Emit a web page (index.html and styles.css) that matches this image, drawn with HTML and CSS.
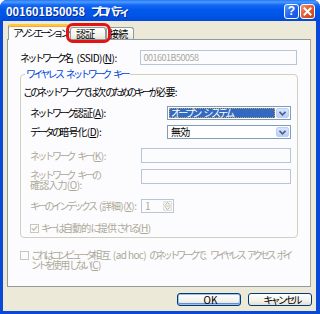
FILE: index.html
```html
<!DOCTYPE html>
<html lang="ja">
<head>
<meta charset="utf-8">
<link rel="stylesheet" href="styles.css">
</head>
<body>
<div class="window">
  <div class="titlebar">
    <span class="title"><span class="en">001601B50058</span> プロパティ</span>
    <span class="tb-btn help">?</span>
    <span class="tb-btn close"><svg width="13" height="13" viewBox="0 0 13 13"><path d="M3.5 3.5 L9.5 9.5 M9.5 3.5 L3.5 9.5" stroke="#fff" stroke-width="2" stroke-linecap="square"/></svg></span>
  </div>
  <div class="frame">
    <div class="body">
      <div class="tabs">
        <div class="tab active">アソシエーション</div>
        <div class="tab t2"><span class="k">認証</span></div>
        <div class="tab t3"><span class="k">接続</span></div>
        <div class="marker"></div>
      </div>
      <div class="panel">
        <div class="row ssid">
          <span class="lbl lbl-ssid">ネットワーク<span class="k">名</span> <span class="en">(SSID)(<u>N</u>):</span></span>
          <span class="edit disabled w-ssid"><span class="val">001601B50058</span></span>
        </div>
        <fieldset class="group">
          <legend>ワイヤレス ネットワーク キー</legend>
          <div class="intro">このネットワークでは<span class="k">次</span>のためのキーが<span class="k">必要</span><span class="en">:</span></div>
          <div class="row r-auth">
            <span class="lbl lbl-combo">ネットワーク<span class="k">認証</span><span class="en">(<u>A</u>):</span></span>
            <span class="combo"><span class="combo-text sel">オープン<span class="gap"></span>システム</span><span class="drop"><svg width="7" height="5" viewBox="0 0 7 5"><path d="M0.5 0.8 L3.5 3.8 L6.5 0.8" fill="none" stroke="#4D6185" stroke-width="1.6"/></svg></span></span>
          </div>
          <div class="row r-enc">
            <span class="lbl lbl-combo">データの<span class="k">暗号化</span><span class="en">(<u>D</u>):</span></span>
            <span class="combo"><span class="combo-text"><span class="k">無効</span></span><span class="drop"><svg width="7" height="5" viewBox="0 0 7 5"><path d="M0.5 0.8 L3.5 3.8 L6.5 0.8" fill="none" stroke="#4D6185" stroke-width="1.6"/></svg></span></span>
          </div>
          <div class="row r-key gray">
            <span class="lbl lbl-key">ネットワーク キー<span class="en">(<u>K</u>):</span></span>
            <span class="edit disabled w-key"></span>
          </div>
          <div class="row r-confirm gray">
            <span class="lbl lbl-key two">ネットワーク キーの<br><span class="k">確認入力</span><span class="en">(<u>O</u>):</span></span>
            <span class="edit disabled w-key"></span>
          </div>
          <div class="row r-index gray">
            <span class="lbl lbl-key">キーのインデックス <span class="en">(</span><span class="k">詳細</span><span class="en">)(<u>X</u>):</span></span>
            <span class="spin"><span class="spin-val en">1</span><span class="spin-btns"><span class="sb"><svg width="5" height="3" viewBox="0 0 5 3"><path d="M0.5 2.5 L2.5 0.5 L4.5 2.5" fill="none" stroke="#B5B5A8" stroke-width="1"/></svg></span><span class="sb"><svg width="5" height="3" viewBox="0 0 5 3"><path d="M0.5 0.5 L2.5 2.5 L4.5 0.5" fill="none" stroke="#B5B5A8" stroke-width="1"/></svg></span></span></span>
          </div>
          <div class="row r-auto gray">
            <span class="chk chk-dis"><svg width="7" height="7" viewBox="0 0 7 7"><path d="M0.8 3.3 L2.7 5.3 L6.3 1.2" fill="none" stroke="#C4C3B4" stroke-width="1.4"/></svg></span>
            <span class="lbl">キーは<span class="k">自動的</span>に<span class="k">提供</span>される<span class="en">(<u>H</u>)</span></span>
          </div>
        </fieldset>
        <div class="adhoc gray">
          <span class="chk chk-big"></span>
          <span class="lbl">これはコンピュータ<span class="k">相互</span> <span class="en">(ad hoc)</span> のネットワークで、ワイヤレス アクセス ポイ<br>ントを<span class="k">使用</span>しない<span class="en">(<u>C</u>)</span></span>
        </div>
      </div>
      <div class="buttons">
        <span class="btn default"><span class="en">OK</span></span>
        <span class="btn">キャンセル</span>
      </div>
    </div>
  </div>
</div>
</body>
</html>
```
FILE: styles.css
```css
* { box-sizing: border-box; margin: 0; padding: 0; }
html, body { width: 320px; height: 314px; overflow: hidden; background: #fff; }
body {
  font-family: "Noto Sans CJK JP", "Noto Sans", sans-serif;
  font-size: 10px;
  line-height: 10px;
  color: #000;
  letter-spacing: -2.7px;
  word-spacing: 4px;
}
.k { letter-spacing: -0.8px; }
.en { letter-spacing: -0.5px; word-spacing: 0; }
u { text-decoration: underline; text-underline-offset: 1px; }

.window {
  width: 320px;
  height: 314px;
  display: flex;
  flex-direction: column;
  background: #0A48D8;
  border-radius: 7px 7px 0 0;
  overflow: hidden;
}
.titlebar {
  height: 21px;
  flex: none;
  display: flex;
  align-items: center;
  padding: 1px 5px 0 6px;
  background: linear-gradient(to bottom, #2A74F4 0, #4A9CFF 2px, #1468F4 5px, #0058EB 10px, #0054E5 16px, #0049D8 21px);
}
.title {
  flex: 1;
  color: #fff;
  font-weight: bold;
  font-size: 11px;
  line-height: 11px;
  text-shadow: 1px 1px 0 #0B2A9C;
  letter-spacing: -3.7px;
  word-spacing: 7px;
  white-space: nowrap;
}
.title .en { letter-spacing: 0; }
.tb-btn {
  width: 15px;
  height: 15px;
  border: 1px solid #fff;
  border-radius: 3px;
  display: flex;
  align-items: center;
  justify-content: center;
  color: #fff;
  font-family: "Liberation Sans", sans-serif;
  letter-spacing: 0;
  font-weight: bold;
  font-size: 12px;
}
.help { background: linear-gradient(135deg, #5A9BFF, #1C60EC 60%, #1A55D8); margin-right: 1px; }
.close { background: linear-gradient(135deg, #F09477, #E25A2E 50%, #C8401C); }

.frame {
  flex: 1;
  display: flex;
  padding: 0 4px 3px 3px;
  min-height: 0;
}
.body {
  flex: 1;
  min-width: 0;
  background: #ECE9D8;
  display: flex;
  flex-direction: column;
}

.tabs {
  position: relative;
  height: 18px;
  flex: none;
  display: flex;
  align-items: flex-end;
  padding-left: 5px;
}
.tab {
  height: 12px;
  border: 1px solid #919B9C;
  border-bottom: none;
  border-radius: 3px 3px 0 0;
  background: linear-gradient(#FFFFFF, #F2F1EA 70%, #E5E4DA);
  display: flex;
  align-items: center;
  white-space: nowrap;
  padding-top: 1px;
}
.tab.active {
  height: 16px;
  width: 61px;
  padding: 0 0 0 4px;
  margin-bottom: -1px;
  margin-right: 1px;
  background: #FCFCFE;
  border-top: 2px solid #FFC83C;
  box-shadow: inset 0 1px 0 #F5A742;
  letter-spacing: -3.2px;
  position: relative;
  z-index: 1;
}
.t2 { width: 36px; padding-left: 5px; }
.t3 { width: 28px; padding-left: 2px; }
.marker {
  position: absolute;
  left: 63px;
  top: 2px;
  width: 45px;
  height: 20px;
  border: 3px solid #E41414;
  border-radius: 7px;
  z-index: 2;
}

.panel {
  height: 248px;
  flex: none;
  margin: 0 5px 0 4px;
  background: #FCFCFE;
  border: 1px solid #919B9C;
  border-right-color: #A7A89E;
  padding: 10px 13px 0 12px;
}

.row { display: flex; align-items: center; }
.lbl { white-space: nowrap; }
.gray { color: #ACA899; }
.ssid { height: 15px; }
.lbl-ssid { width: 120px; }
.edit {
  height: 15px;
  border: 1px solid #7F9DB9;
  background: #fff;
  padding: 0 3px;
  display: flex;
  align-items: center;
}
.edit.disabled { border-color: #B7C5D6; background: #FCFCFE; color: #A8A8A0; }
.val { font-size: 9px; letter-spacing: -0.5px; }
.w-ssid { width: 158px; }
.w-key { width: 150px; }

.group {
  margin-top: 4px;
  width: 278px;
  border: 1px solid #D0D0BF;
  border-radius: 4px;
  padding: 0 0 4px 0;
}
.group legend {
  margin-left: 4px;
  padding: 0 2px 0 1px;
  color: #0046D5;
  line-height: 10px;
}
.intro { margin: 8px 0 0 2px; height: 10px; white-space: nowrap; }
.r-auth, .r-enc, .r-key, .r-confirm, .r-index, .r-auto { margin-left: 9px; }
.r-auth { margin-top: 9px; height: 14px; }
.r-enc { margin-top: 5px; height: 14px; }
.lbl-combo { width: 137px; }
.combo {
  width: 124px;
  height: 14px;
  border: 1px solid #7F9DB9;
  background: #fff;
  display: flex;
  align-items: stretch;
  padding: 1px;
}
.combo-text {
  flex: 1;
  display: flex;
  align-items: center;
  padding-left: 2px;
  margin-right: 1px;
  white-space: nowrap;
}
.gap { display: inline-block; width: 4px; }
.combo-text.sel {
  background: #316AC5;
  color: #fff;
  outline: 1px dotted #C9A24A;
  outline-offset: -1px;
}
.drop {
  width: 13px;
  border: 1px solid #B9D1FA;
  border-radius: 2px;
  background: linear-gradient(#D9E5FD, #BCCDF8);
  display: flex;
  align-items: center;
  justify-content: center;
}
.r-key { margin-top: 9px; height: 15px; }
.lbl-key { width: 111px; }
.r-confirm { margin-top: 6px; align-items: flex-start; height: 20px; }
.lbl-key.two { padding-top: 1px; }
.r-index { margin-top: 10px; height: 14px; }
.spin {
  width: 33px;
  height: 14px;
  border: 1px solid #B7C5D6;
  display: flex;
  background: #FCFCFE;
}
.spin-val { flex: 1; padding-left: 3px; display: flex; align-items: center; color: #ACA899; }
.spin-btns { width: 10px; display: flex; flex-direction: column; padding: 1px 1px 1px 0; }
.sb {
  flex: 1;
  border: 1px solid #E0DFD6;
  border-radius: 1px;
  background: #F4F3EE;
  display: flex;
  align-items: center;
  justify-content: center;
}
.r-auto { margin-top: 10px; height: 10px; }
.chk {
  width: 9px;
  height: 9px;
  border: 1px solid #1C5180;
  background: #fff;
  display: flex;
  align-items: center;
  justify-content: center;
  flex: none;
}
.chk-dis { border-color: #C9C7BA; background: #FCFCFE; margin-right: 2px; }
.adhoc {
  margin-top: 12px;
  display: flex;
  align-items: flex-start;
}
.adhoc .lbl { letter-spacing: -3.2px; }
.adhoc .k { letter-spacing: -1.2px; }
.adhoc .en { letter-spacing: -0.6px; }
.chk-big { border-color: #C9C7BA; background: #FCFCFE; margin-top: 1px; margin-right: 2px; }

.buttons {
  display: flex;
  justify-content: flex-end;
  gap: 7px;
  padding: 6px 4px 0 0;
}
.btn {
  width: 64px;
  height: 13px;
  border: 1px solid #003C74;
  border-radius: 3px;
  background: linear-gradient(#FFFFFF, #F3F2EC 60%, #E3E1D5);
  display: flex;
  align-items: center;
  justify-content: center;
  padding-left: 3px;
}
.btn .en { letter-spacing: 0; }
.btn.default { box-shadow: inset 0 0 0 1px #9DBFF2, inset 0 -1px 0 1px #5E8FE0; }
```
